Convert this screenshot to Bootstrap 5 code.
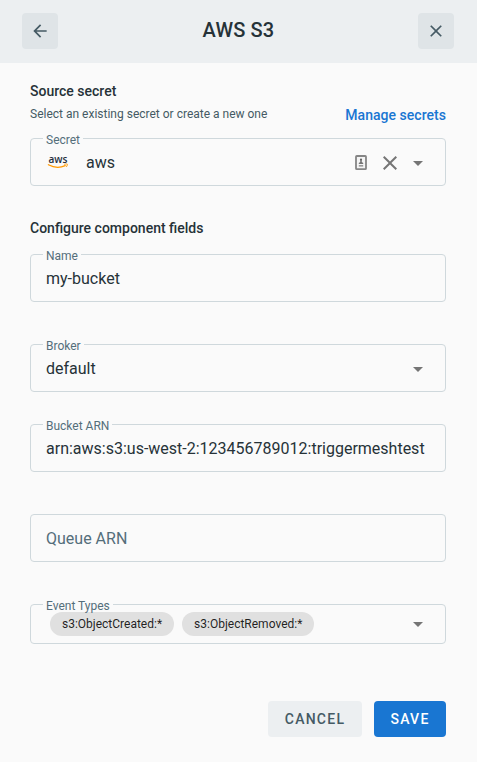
<!DOCTYPE html>
<html lang="en">
<head>
<meta charset="utf-8">
<meta name="viewport" content="width=device-width, initial-scale=1">
<title>AWS S3</title>
<link href="https://cdn.jsdelivr.net/npm/bootstrap@5.3.0/dist/css/bootstrap.min.css" rel="stylesheet">
<style>
body{font-family:Roboto,sans-serif;font-size:16px;line-height:24px;color:#263238;background:#fafafa;min-height:762px}
.topbar{height:63px;padding:0 23px 1px 22px;background:#eceff1}
.topbar h1{font-size:20px;line-height:32px;font-weight:500;letter-spacing:.15px;padding:0 0 2px 1px}
.icon-btn{width:36px;height:36px;border-radius:4px;background:#dfe4e7;color:#455a64}
.content{padding:18px 31px 0 30px}
.section-title{font-size:14px;line-height:20px;font-weight:500}
.hint-row{height:24px}
.hint{font-size:12px;line-height:18px;color:#455a64}
.manage{font-size:14px;line-height:20px;font-weight:500;letter-spacing:.035px;color:#1976d2}
.field{height:48px;border:1px solid #cfd8dc;border-radius:4px;padding:2px 15px 0}
.field-label{position:absolute;left:12px;top:-5px;padding:0 3px;font-size:12px;line-height:12px;color:#546e7a;background:#fafafa}
.ghost{color:#546e7a}
.chip{height:24px;padding:0 12px;border-radius:12px;font-size:12px;line-height:24px;color:rgba(0,0,0,.87);background:#e0e0e0}
.field svg,.icon-btn svg{display:block;flex:none}
.secret{margin-top:13px}
.secret-name{margin-left:16px}
.logo{margin-top:-2px}
.key{margin-right:11px}
.clear{margin-right:4px}
.configure{margin-top:32px}
.f-name{margin-top:16px}
.f-broker,.f-queue,.f-events{margin-top:42px}
.f-bucket{margin-top:32px}
.f-events{height:40px;padding-top:0}
.chips{margin-left:4px}
.actions{margin-top:57px;gap:12px}
.action{height:36px;border:0;border-radius:4px;padding:0;font-size:14px;font-weight:500;letter-spacing:1.25px}
.cancel{width:94px;background:#eceff1;color:#455a64}
.save{width:72px;background:#1976d2;color:#fff}
</style>
</head>
<body>
<header class="topbar d-flex align-items-center justify-content-between">
  <button class="icon-btn btn border-0 p-0 d-flex align-items-center justify-content-center" aria-label="Back">
    <svg width="20" height="20" viewBox="0 0 24 24" fill="currentColor"><path d="M20 11H7.83l5.59-5.59L12 4l-8 8 8 8 1.41-1.41L7.83 13H20v-2z"/></svg>
  </button>
  <h1 class="m-0">AWS S3</h1>
  <button class="icon-btn btn border-0 p-0 d-flex align-items-center justify-content-center" aria-label="Close">
    <svg width="20" height="20" viewBox="0 0 24 24" fill="currentColor"><path d="M19 6.41L17.59 5 12 10.59 6.41 5 5 6.41 10.59 12 5 17.59 6.41 19 12 13.41 17.59 19 19 17.59 13.41 12z"/></svg>
  </button>
</header>
<main class="content">
  <div class="section-title">Source secret</div>
  <div class="d-flex justify-content-between hint-row">
    <span class="hint mt-1">Select an existing secret or create a new one</span>
    <a class="manage mt-1 text-decoration-none" href="#">Manage secrets</a>
  </div>
  <div class="field position-relative d-flex align-items-center secret">
    <span class="field-label">Secret</span>
    <svg class="logo" width="24" height="24" viewBox="0 0 24 24"><text x="2.4" y="12.6" font-family="Open Sans, sans-serif" font-size="11" font-weight="600" fill="#252f3e" textLength="19" lengthAdjust="spacingAndGlyphs">aws</text><path d="M2.4 14.8Q11 19.4 19.2 15.6" fill="none" stroke="#f90" stroke-width="1.3" stroke-linecap="round"/><path d="M18.2 14.3q3.8-.9 3.2.5-.4 1.5-1.2 2.2" fill="none" stroke="#f90" stroke-width=".9"/></svg>
    <span class="secret-name">aws</span>
    <div class="ms-auto d-flex align-items-center">
      <svg class="key" width="12" height="16" viewBox="0 0 12 16"><rect x="1" y="1" width="10" height="13.2" rx=".8" fill="#f4f4f4" stroke="#858585" stroke-width="1.8"/><circle cx="6" cy="4.6" r="1.1" fill="#666"/><path d="M5.2 5h1.6v2L8.2 8v1H3.8V8l1.4-1z" fill="#757575"/><path d="M3.8 10h4.4v1.6H3.8z" fill="#999"/></svg>
      <svg class="clear" width="24" height="24" viewBox="0 0 24 24" fill="#757575"><path d="M19 6.41L17.59 5 12 10.59 6.41 5 5 6.41 10.59 12 5 17.59 6.41 19 12 13.41 17.59 19 19 17.59 13.41 12z"/></svg>
      <svg width="24" height="24" viewBox="0 0 24 24" fill="#757575"><path d="M7 10l5 5 5-5z"/></svg>
    </div>
  </div>
  <div class="section-title configure">Configure component fields</div>
  <div class="field position-relative d-flex align-items-center f-name"><span class="field-label">Name</span>my-bucket</div>
  <div class="field position-relative d-flex align-items-center justify-content-between f-broker"><span class="field-label">Broker</span>default
    <svg width="24" height="24" viewBox="0 0 24 24" fill="#757575"><path d="M7 10l5 5 5-5z"/></svg></div>
  <div class="field position-relative d-flex align-items-center f-bucket"><span class="field-label">Bucket ARN</span>arn:aws:s3:us-west-2:123456789012:triggermeshtest</div>
  <div class="field d-flex align-items-center ghost f-queue">Queue ARN</div>
  <div class="field position-relative d-flex align-items-center f-events"><span class="field-label">Event Types</span>
    <div class="d-flex gap-2 chips"><span class="chip">s3:ObjectCreated:*</span><span class="chip">s3:ObjectRemoved:*</span></div>
    <svg class="ms-auto" width="24" height="24" viewBox="0 0 24 24" fill="#757575"><path d="M7 10l5 5 5-5z"/></svg></div>
  <div class="d-flex justify-content-end actions">
    <button class="btn action cancel">CANCEL</button>
    <button class="btn action save">SAVE</button>
  </div>
</main>
<script src="https://cdn.jsdelivr.net/npm/bootstrap@5.3.0/dist/js/bootstrap.bundle.min.js"></script>
</body>
</html>
